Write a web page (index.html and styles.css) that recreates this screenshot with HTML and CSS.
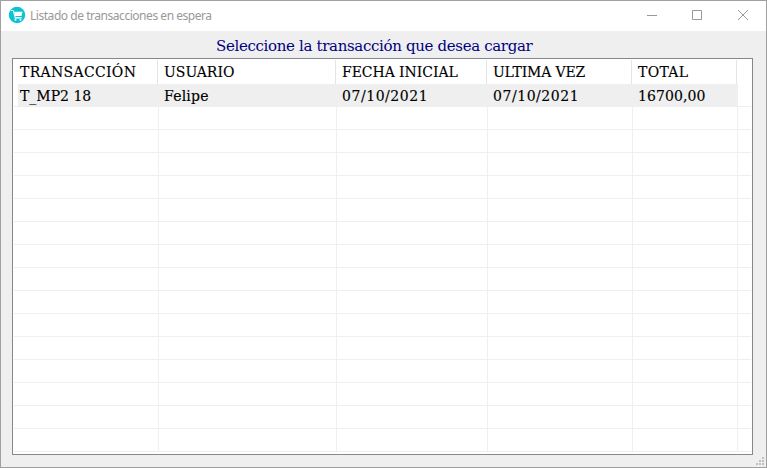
FILE: index.html
```html
<!DOCTYPE html>
<html lang="es">
<head>
<meta charset="utf-8">
<title>Listado de transacciones en espera</title>
<link rel="stylesheet" href="styles.css">
</head>
<body>
<div class="window">
  <header class="titlebar">
    <svg class="logo" viewBox="0 0 16 16"><circle cx="8" cy="8" r="8.2" fill="#08c4d4"/><path d="M2 3.5h2.2l2 7h6.3" fill="none" stroke="#fff"/><path d="M5 4.8h8.6l-1.2 4.2H6.2z" fill="#fff"/><path d="M5.5 11h7" stroke="#fff"/><circle cx="6.5" cy="12.8" r="1" fill="#fff"/><circle cx="11.5" cy="12.8" r="1" fill="#fff"/></svg>
    <span class="caption">Listado de transacciones en espera</span>
    <div class="controls">
      <svg viewBox="0 0 10 10"><path d="M0 5.5h10"/></svg>
      <svg viewBox="0 0 10 10"><path d="M.5 .5h9v9h-9z"/></svg>
      <svg viewBox="0 0 10 10"><path d="M0 0l10 10M10 0L0 10"/></svg>
    </div>
  </header>
  <h1 class="prompt"><span class="w-prompt">Seleccione la transacción que desea cargar</span></h1>
  <main class="list">
    <div class="head"><span class="w-tran">TRANSACCIÓN</span><span class="w-user">USUARIO</span><span class="w-first">FECHA INICIAL</span><span class="w-last">ULTIMA VEZ</span><span class="w-total">TOTAL</span></div>
    <div class="row selected"><span class="w-id">T_MP2 18</span><span class="w-name">Felipe</span><span class="w-date">07/10/2021</span><span class="w-date">07/10/2021</span><span class="w-amount">16700,00</span><span></span></div>
    <div class="row"><span></span><span></span><span></span><span></span><span></span></div>
    <div class="row"><span></span><span></span><span></span><span></span><span></span></div>
    <div class="row"><span></span><span></span><span></span><span></span><span></span></div>
    <div class="row"><span></span><span></span><span></span><span></span><span></span></div>
    <div class="row"><span></span><span></span><span></span><span></span><span></span></div>
    <div class="row"><span></span><span></span><span></span><span></span><span></span></div>
    <div class="row"><span></span><span></span><span></span><span></span><span></span></div>
    <div class="row"><span></span><span></span><span></span><span></span><span></span></div>
    <div class="row"><span></span><span></span><span></span><span></span><span></span></div>
    <div class="row"><span></span><span></span><span></span><span></span><span></span></div>
    <div class="row"><span></span><span></span><span></span><span></span><span></span></div>
    <div class="row"><span></span><span></span><span></span><span></span><span></span></div>
    <div class="row"><span></span><span></span><span></span><span></span><span></span></div>
    <div class="row"><span></span><span></span><span></span><span></span><span></span></div>
    <div class="row"><span></span><span></span><span></span><span></span><span></span></div>
  </main>
  <svg class="grip" viewBox="0 0 8 8"><path d="M6 0h2v2H6zM3 3h2v2H3zM6 3h2v2H6zM0 6h2v2H0zM3 6h2v2H3zM6 6h2v2H6z"/></svg>
</div>
</body>
</html>
```
FILE: styles.css
```css
* { box-sizing: border-box; }
body { margin: 0; }
.window {
  position: relative;
  width: 767px;
  height: 468px;
  border: 1px solid #a0a0a0;
  background: #efefef;
  overflow: hidden;
}
.titlebar {
  display: flex;
  align-items: center;
  height: 30px;
  padding-left: 8px;
  background: #fff;
}
.logo { width: 16px; height: 16px; margin-top: -2px; overflow: visible; }
.caption {
  margin-left: 5px;
  font: 12px/16px "Noto Sans", sans-serif;
  letter-spacing: -0.46px;
  color: #999;
  white-space: nowrap;
}
.controls {
  display: flex;
  gap: 35px;
  margin-left: auto;
  margin-right: 18px;
  margin-top: -2px;
}
.controls svg { width: 10px; height: 10px; fill: none; stroke: #999; overflow: visible; }
.controls svg:not(:last-child) { margin-left: -1px; margin-right: 1px; }
.prompt {
  height: 27px;
  margin: 0;
  padding-left: 215px;
  font: 15px/31px Rockwell, "DejaVu Serif", serif;
  color: #000080;
  white-space: nowrap;
}
.list {
  width: 741px;
  height: 397px;
  margin-left: 11px;
  padding: 1px 1px 0;
  border: 1px solid #828790;
  background: #fff;
  font: 14px/23px Rockwell, "DejaVu Serif", serif;
  color: #000;
  -webkit-text-stroke: 0.15px #000;
}
.head, .row {
  display: grid;
  grid-template-columns: 145px 178px 151px 145px 105px 1fr;
  white-space: nowrap;
}
.head { height: 24px; margin-left: -1px; line-height: 24px; }
.head span { padding-left: 7px; border-right: 1px solid #e5e5e5; }
.head span + span { padding-left: 6px; }
.row { height: 23px; border-bottom: 1px solid #efefef; }
.row span { padding-left: 5px; border-right: 1px solid #efefef; }
.row span:last-child:nth-child(6) { background: #fff; border: 0; }
.selected { line-height: 24px; background: linear-gradient(#fff, #fff) 0 0 / 4px 100% no-repeat #efefef; }
.selected span { height: 22px; }
.row span:first-child { padding-left: 6px; }
.grip {
  position: absolute;
  right: 2px;
  bottom: 2px;
  width: 8px;
  height: 8px;
  fill: #bfbfbf;
}
.w-prompt { letter-spacing: -0.34px; }
.w-tran { letter-spacing: 0.33px; }
.w-user { letter-spacing: 0; }
.w-first { letter-spacing: -0.05px; }
.w-last { letter-spacing: -0.18px; }
.w-total { letter-spacing: 0.3px; }
.w-id { letter-spacing: 0; }
.w-name { letter-spacing: 0.2px; }
.w-date { letter-spacing: 0.55px; }
.w-amount { letter-spacing: 0.1px; }
```
